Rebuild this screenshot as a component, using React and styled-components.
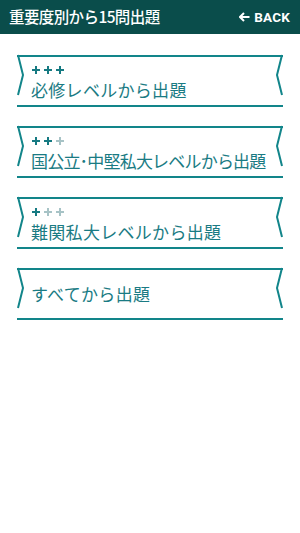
import React from "react";
import styled, { createGlobalStyle } from "styled-components";

const Global = createGlobalStyle`
  html, body { margin: 0; padding: 0; background: #ffffff; }
  body { font-family: "Noto Sans CJK JP", "Noto Sans", sans-serif; }
  * { box-sizing: border-box; }
`;

const Page = styled.div`
  width: 300px;
  min-height: 533px;
  background: #ffffff;
`;

const Header = styled.header`
  height: 34px;
  background: #0a4d4b;
  display: flex;
  align-items: center;
  justify-content: space-between;
  padding: 0 10px 0 9px;
  color: #ffffff;
`;

const Title = styled.h1`
  margin: 0;
  font-size: 15.5px;
  font-weight: 500;
  letter-spacing: -0.6px;
  font-family: "Noto Sans CJK JP", sans-serif;
  line-height: 1;
`;

const Back = styled.button`
  display: flex;
  align-items: center;
  gap: 4px;
  background: none;
  border: none;
  padding: 0;
  color: #ffffff;
  font-family: Roboto, "Liberation Sans", sans-serif;
  font-weight: 700;
  font-size: 13.5px;
  letter-spacing: 0.2px;
`;

const List = styled.main`
  display: flex;
  flex-direction: column;
  gap: 19px;
  padding: 21px 17px 0 17px;
`;

const Card = styled.div`
  position: relative;
  height: 52px;
  border-top: 2px solid #12858a;
  border-bottom: 2px solid #12858a;
  cursor: pointer;
`;

const Sides = styled.svg`
  position: absolute;
  left: 0;
  top: -2px;
  width: 100%;
  height: 41px;
  overflow: visible;
  pointer-events: none;
`;

const Content = styled.div`
  display: flex;
  flex-direction: column;
  padding-left: 14px;
  padding-top: ${(p) => (p.$hasLevel ? "7px" : "14px")};
`;

const Pluses = styled.div`
  display: flex;
  gap: 4px;
  height: 11px;
  align-items: center;
  margin-bottom: 5px;
  padding-left: 1px;
`;

const Label = styled.div`
  color: #1a7b83;
  font-size: 17px;
  line-height: 20px;
  letter-spacing: ${(p) => p.$spacing};
  font-family: "Noto Sans CJK JP", sans-serif;
  white-space: nowrap;
`;

const Plus = ({ on }) => (
  <svg width="8" height="8" viewBox="0 0 8 8">
    <rect x="0" y="3" width="8" height="2" fill={on ? "#167a82" : "#a7c3c6"} />
    <rect x="3" y="0" width="2" height="8" fill={on ? "#167a82" : "#a7c3c6"} />
  </svg>
);

const items = [
  { level: 3, label: "必修レベルから出題", spacing: "0.3px" },
  { level: 2, label: "国公立･中堅私大レベルから出題", spacing: "-0.8px" },
  { level: 1, label: "難関私大レベルから出題", spacing: "0.3px" },
  { level: 0, label: "すべてから出題", spacing: "0.3px" },
];

const Chevrons = () => (
  <Sides viewBox="0 0 266 41" preserveAspectRatio="none">
    <polyline points="1,0 6,20 1,40" fill="none" stroke="#12858a" strokeWidth="2" />
    <polyline points="265,0 260,20 265,40" fill="none" stroke="#12858a" strokeWidth="2" />
  </Sides>
);

export default function App() {
  return (
    <Page>
      <Global />
      <Header>
        <Title>重要度別から15問出題</Title>
        <Back>
          <svg width="11" height="10" viewBox="0 0 11 10">
            <path d="M5 1 L1 5 L5 9 M1 5 H10.5" fill="none" stroke="#fff" strokeWidth="2" />
          </svg>
          BACK
        </Back>
      </Header>
      <List>
        {items.map((it) => (
          <Card key={it.label}>
            <Chevrons />
            <Content $hasLevel={it.level > 0}>
              {it.level > 0 && (
                <Pluses>
                  {[0, 1, 2].map((i) => (
                    <Plus key={i} on={i < it.level} />
                  ))}
                </Pluses>
              )}
              <Label $spacing={it.spacing}>{it.label}</Label>
            </Content>
          </Card>
        ))}
      </List>
    </Page>
  );
}
